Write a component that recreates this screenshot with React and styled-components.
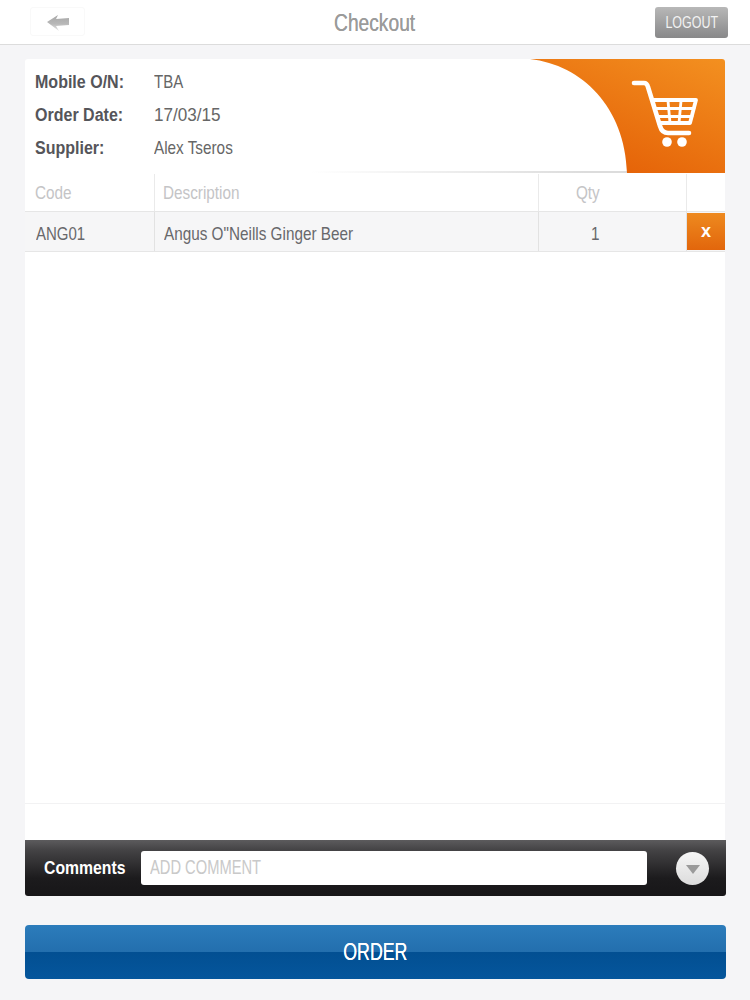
import React from "react";
import styled, { createGlobalStyle } from "styled-components";

const GlobalStyle = createGlobalStyle`
  html, body {
    margin: 0;
    padding: 0;
    background: #f5f5f7;
  }
  body {
    font-family: "Liberation Sans", Arial, sans-serif;
  }
`;

// the design uses a condensed face, none is installed so squeeze Liberation Sans
const Narrow = styled.span`
  display: inline-block;
  white-space: nowrap;
  transform: scaleX(${({ $x }) => $x || 0.805});
  transform-origin: ${({ $origin }) => $origin || "left"} center;
`;

const App = () => (
  <Page>
    <GlobalStyle />
    <TopBar>
      <BackButton aria-label="Back">
        <svg width="24" height="18" viewBox="0 0 24 18">
          <defs>
            <linearGradient id="arrow" x1="0" y1="0" x2="0" y2="1">
              <stop offset="0" stopColor="#a6a6a6" />
              <stop offset="0.55" stopColor="#b8b8b8" />
              <stop offset="1" stopColor="#e8e8e8" />
            </linearGradient>
          </defs>
          <path d="M1 8 L12 1 L10 5 L23 4 L23 11 L10 12 L13 17 Z" fill="url(#arrow)" />
        </svg>
      </BackButton>
      <Title>
        <Narrow $x={0.835} $origin="center">Checkout</Narrow>
      </Title>
      <LogoutButton>
        <Narrow $x={0.78} $origin="center">LOGOUT</Narrow>
      </LogoutButton>
    </TopBar>

    <Card>
      <OrderHeader>
        <OrderInfo>
          <InfoRow>
            <InfoLabel><Narrow $x={0.89}>Mobile O/N:</Narrow></InfoLabel>
            <InfoValue><Narrow $x={0.79}>TBA</Narrow></InfoValue>
          </InfoRow>
          <InfoRow>
            <InfoLabel><Narrow $x={0.89}>Order Date:</Narrow></InfoLabel>
            <InfoValue><Narrow $x={0.9}>17/03/15</Narrow></InfoValue>
          </InfoRow>
          <InfoRow>
            <InfoLabel><Narrow $x={0.89}>Supplier:</Narrow></InfoLabel>
            <InfoValue><Narrow>Alex Tseros</Narrow></InfoValue>
          </InfoRow>
        </OrderInfo>
        <CartCorner width="195" height="114" viewBox="0 0 195 114">
          <defs>
            <linearGradient id="corner" x1="1" y1="0" x2="0.3" y2="1">
              <stop offset="0" stopColor="#f39020" />
              <stop offset="1" stopColor="#e45f06" />
            </linearGradient>
          </defs>
          <path d="M0 0 C52 6 95 48 97 114 L195 114 L195 3 Q195 0 192 0 Z" fill="url(#corner)" />
          <g fill="none" stroke="#fff" strokeLinecap="round" strokeLinejoin="round">
            <path d="M104 24 L114 24 Q117 24 118 28 L130 67 Q132 74 138 74 L159 74" strokeWidth="4.600" />
            <path d="M123 41 L166 41 L160 64 L129 64" strokeWidth="3.800" />
            <path d="M126 49.500 L164 49.500 M128 57.500 L162 57.500 M138 42 L140 64 M151 42 L149 64" strokeWidth="2.800" />
          </g>
          <circle cx="137" cy="83" r="4.800" fill="#fff" />
          <circle cx="152" cy="83" r="4.800" fill="#fff" />
        </CartCorner>
      </OrderHeader>

      <TableHead>
        <HeadCell><Narrow>Code</Narrow></HeadCell>
        <HeadCell $indent="8px"><Narrow>Description</Narrow></HeadCell>
        <HeadCell $center $endPad="60px"><Narrow $origin="center">Qty</Narrow></HeadCell>
        <HeadCell />
      </TableHead>

      <TableRow>
        <BodyCell><Narrow $x={0.79}>ANG01</Narrow></BodyCell>
        <BodyCell $indent="9px"><Narrow>Angus O"Neills Ginger Beer</Narrow></BodyCell>
        <BodyCell $center $endPad="46px"><Narrow $origin="center">1</Narrow></BodyCell>
        <RemoveButton>x</RemoveButton>
      </TableRow>

      <EmptyArea />
      <CardFooter />
    </Card>

    <CommentsBar>
      <CommentsLabel><Narrow $x={0.83}>Comments</Narrow></CommentsLabel>
      <CommentField><Narrow $x={0.735}>ADD COMMENT</Narrow></CommentField>
      <DropButton aria-label="More">
        <svg width="14" height="9" viewBox="0 0 14 9">
          <path d="M0 0 L14 0 L7 9 Z" fill="#9a9a9a" />
        </svg>
      </DropButton>
    </CommentsBar>

    <OrderButton>
      <Narrow $x={0.74} $origin="center">ORDER</Narrow>
    </OrderButton>
  </Page>
);

const Page = styled.div`
  width: 750px;
  height: 1000px;
  overflow: hidden;
  display: flex;
  flex-direction: column;
  background: #f5f5f7;
`;

const TopBar = styled.header`
  height: 45px;
  flex: none;
  box-sizing: border-box;
  padding: 7px 22px 0;
  display: grid;
  grid-template-columns: 1fr auto 1fr;
  align-items: start;
  background: #fff;
  border-bottom: 1px solid #dcdcdc;
`;

const BackButton = styled.button`
  width: 55px;
  height: 29px;
  margin-left: 8px;
  padding: 2px 0 0;
  border: 1px solid #f9f9f9;
  border-radius: 3px;
  background: #fff;
  display: flex;
  align-items: center;
  justify-content: center;
`;

const Title = styled.h1`
  margin: 3px 0 0;
  font-size: 23px;
  line-height: 27px;
  font-weight: 400;
  color: #9b9b9b;
  text-shadow: 0 0 0.4px #9b9b9b;
`;

const LogoutButton = styled.button`
  justify-self: end;
  width: 73px;
  height: 31px;
  padding: 0;
  border: 0;
  border-radius: 3px;
  background: linear-gradient(#b8b8b8, #888889);
  color: #f2f2f2;
  font-family: inherit;
  font-size: 16px;
`;

const Card = styled.main`
  margin: 14px 25px 0;
  height: 781px;
  flex: none;
  display: flex;
  flex-direction: column;
  border-radius: 3px 3px 0 0;
  background: #fff;
`;

const OrderHeader = styled.section`
  height: 115px;
  flex: none;
  display: flex;
  justify-content: space-between;
  align-items: flex-start;
  background: linear-gradient(90deg, transparent 285px, #dcdcdc 560px) 0 112px / 100% 2px no-repeat;
`;

const OrderInfo = styled.div`
  padding: 11px 0 0 10px;
  display: flex;
  flex-direction: column;
  gap: 9px;
`;

const InfoRow = styled.div`
  display: flex;
  height: 24px;
  align-items: center;
`;

const InfoLabel = styled.span`
  width: 119px;
  font-size: 18px;
  font-weight: 700;
  color: #55555a;
`;

const InfoValue = styled.span`
  font-size: 19px;
  color: #666;
`;

const CartCorner = styled.svg`
  display: block;
  flex: none;
`;

const columns = "130px 384px 148px 38px";

const TableHead = styled.div`
  display: grid;
  grid-template-columns: ${columns};
  height: 38px;
  flex: none;
  box-sizing: border-box;
  border-bottom: 1px solid #e6e6e6;
`;

const HeadCell = styled.div`
  display: flex;
  align-items: center;
  justify-content: ${({ $center }) => ($center ? "center" : "flex-start")};
  padding-left: ${({ $indent }) => $indent || "10px"};
  padding-right: ${({ $endPad }) => $endPad || "0"};
  font-size: 19px;
  color: #c4c4c6;
  border-right: 1px solid #eaeaea;
  &:last-child {
    border-right: 0;
  }
`;

const TableRow = styled.div`
  display: grid;
  grid-template-columns: ${columns};
  height: 40px;
  flex: none;
  box-sizing: border-box;
  background: #f6f6f7;
  border-bottom: 1px solid #e6e6e6;
`;

const BodyCell = styled.div`
  display: flex;
  align-items: center;
  justify-content: ${({ $center }) => ($center ? "center" : "flex-start")};
  padding-left: ${({ $indent }) => $indent || "11px"};
  padding-right: ${({ $endPad }) => $endPad || "0"};
  padding-top: 4px;
  font-size: 19px;
  color: #68686b;
  border-right: 1px solid #e2e2e2;
`;

const RemoveButton = styled.button`
  height: 37px;
  margin-top: 1px;
  padding: 0;
  border: 0;
  background: linear-gradient(#ee8a1f, #e2660c);
  color: #fff;
  font-family: inherit;
  font-size: 18px;
  font-weight: 700;
`;

const EmptyArea = styled.div`
  flex: 1;
  border-bottom: 1px solid #f2f2f3;
`;

const CardFooter = styled.div`
  height: 36px;
  flex: none;
`;

const CommentsBar = styled.section`
  margin: 0 24px 0 25px;
  height: 56px;
  flex: none;
  box-sizing: border-box;
  padding: 0 17px 0 19px;
  display: flex;
  align-items: center;
  border-radius: 0 0 3px 3px;
  background: linear-gradient(#5c5b5d 0, #444345 18%, #1c1b1d 68%, #171618 100%);
`;

const CommentsLabel = styled.span`
  width: 97px;
  flex: none;
  font-size: 19px;
  font-weight: 700;
  color: #fff;
`;

const CommentField = styled.div`
  width: 506px;
  height: 34px;
  flex: none;
  margin-bottom: 1px;
  box-sizing: border-box;
  padding: 0 9px;
  display: flex;
  align-items: center;
  border-radius: 3px;
  background: #fff;
  font-size: 20px;
  color: #c9c9c9;
`;

const DropButton = styled.button`
  width: 33px;
  height: 33px;
  margin-left: auto;
  padding: 2px 0 0;
  border: 0;
  border-radius: 50%;
  background: linear-gradient(#f6f6f6, #dcdcdc);
  display: flex;
  align-items: center;
  justify-content: center;
`;

const OrderButton = styled.button`
  margin: 29px 24px 0 25px;
  height: 54px;
  flex: none;
  padding: 0;
  border: 0;
  border-radius: 4px;
  background: linear-gradient(#2c7cbb 0, #236fae 50%, #024f92 50%, #05569c 100%);
  color: #fff;
  font-family: inherit;
  font-size: 24px;
  text-shadow: 0 0 0.5px #fff;
`;

export default App;
